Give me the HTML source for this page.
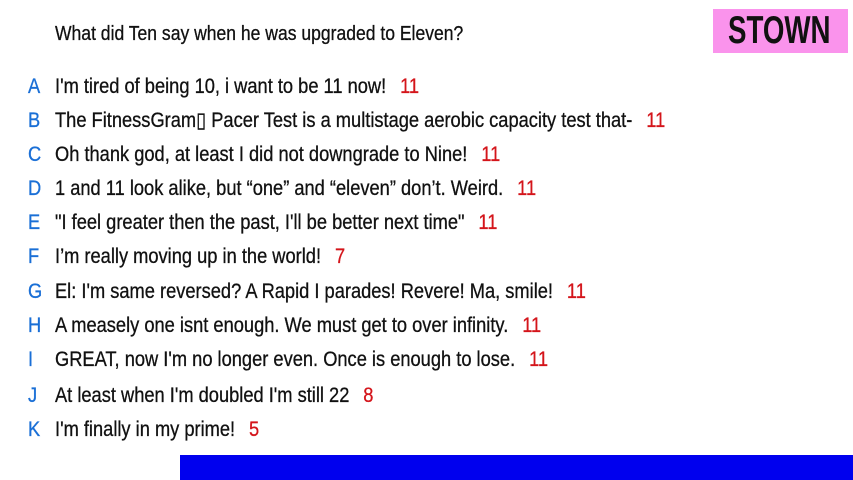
<!DOCTYPE html>
<html><head><meta charset="utf-8"><style>
html,body{margin:0;padding:0;width:853px;height:480px;overflow:hidden;background:#fff;}
body{position:relative;font-family:"Liberation Sans",sans-serif;color:#111;}
.q{position:absolute;left:55px;top:22px;font-size:20px;line-height:24px;white-space:nowrap;transform:scaleX(0.877);transform-origin:0 50%;-webkit-text-stroke:0.3px #111;}
.r{position:absolute;left:0;height:24px;line-height:24px;font-size:21px;white-space:nowrap;}
.l{position:absolute;left:28px;color:#1a6fd6;transform:scaleX(0.87);transform-origin:0 50%;-webkit-text-stroke:0.3px #1a6fd6;}
.t{position:absolute;left:55px;transform:scaleX(0.87);transform-origin:0 50%;-webkit-text-stroke:0.3px #111;}
.n{color:#d4151b;margin-left:16px;-webkit-text-stroke:0.3px #d4151b;}
.logo{position:absolute;left:713px;top:9px;width:135px;height:44px;background:#fa93ec;}
.logo span{position:absolute;left:15px;top:0;font-weight:bold;font-size:39px;line-height:44px;color:#111;transform:scaleX(0.71);transform-origin:0 50%;white-space:nowrap;}
.bar{position:absolute;left:180px;top:455px;width:673px;height:25px;background:#0000ee;}
</style></head><body>
<div class="q">What did Ten say when he was upgraded to Eleven?</div>
<div class="logo"><span>STOWN</span></div>
<div class="r" style="top:75px"><span class="l">A</span><span class="t">I'm tired of being 10, i want to be 11 now!<span class="n">11</span></span></div>
<div class="r" style="top:109px"><span class="l">B</span><span class="t">The FitnessGram&#9647; Pacer Test is a multistage aerobic capacity test that-<span class="n">11</span></span></div>
<div class="r" style="top:143px"><span class="l">C</span><span class="t">Oh thank god, at least I did not downgrade to Nine!<span class="n">11</span></span></div>
<div class="r" style="top:177px"><span class="l">D</span><span class="t">1 and 11 look alike, but “one” and “eleven” don’t. Weird.<span class="n">11</span></span></div>
<div class="r" style="top:211px"><span class="l">E</span><span class="t">"I feel greater then the past, I'll be better next time"<span class="n">11</span></span></div>
<div class="r" style="top:245px"><span class="l">F</span><span class="t">I’m really moving up in the world!<span class="n">7</span></span></div>
<div class="r" style="top:280px"><span class="l">G</span><span class="t">El: I'm same reversed? A Rapid I parades! Revere! Ma, smile!<span class="n">11</span></span></div>
<div class="r" style="top:314px"><span class="l">H</span><span class="t">A measely one isnt enough. We must get to over infinity.<span class="n">11</span></span></div>
<div class="r" style="top:348px"><span class="l">I</span><span class="t">GREAT, now I'm no longer even. Once is enough to lose.<span class="n">11</span></span></div>
<div class="r" style="top:384px"><span class="l">J</span><span class="t">At least when I'm doubled I'm still 22<span class="n">8</span></span></div>
<div class="r" style="top:418px"><span class="l">K</span><span class="t">I'm finally in my prime!<span class="n">5</span></span></div>
<div class="bar"></div>
</body></html>
